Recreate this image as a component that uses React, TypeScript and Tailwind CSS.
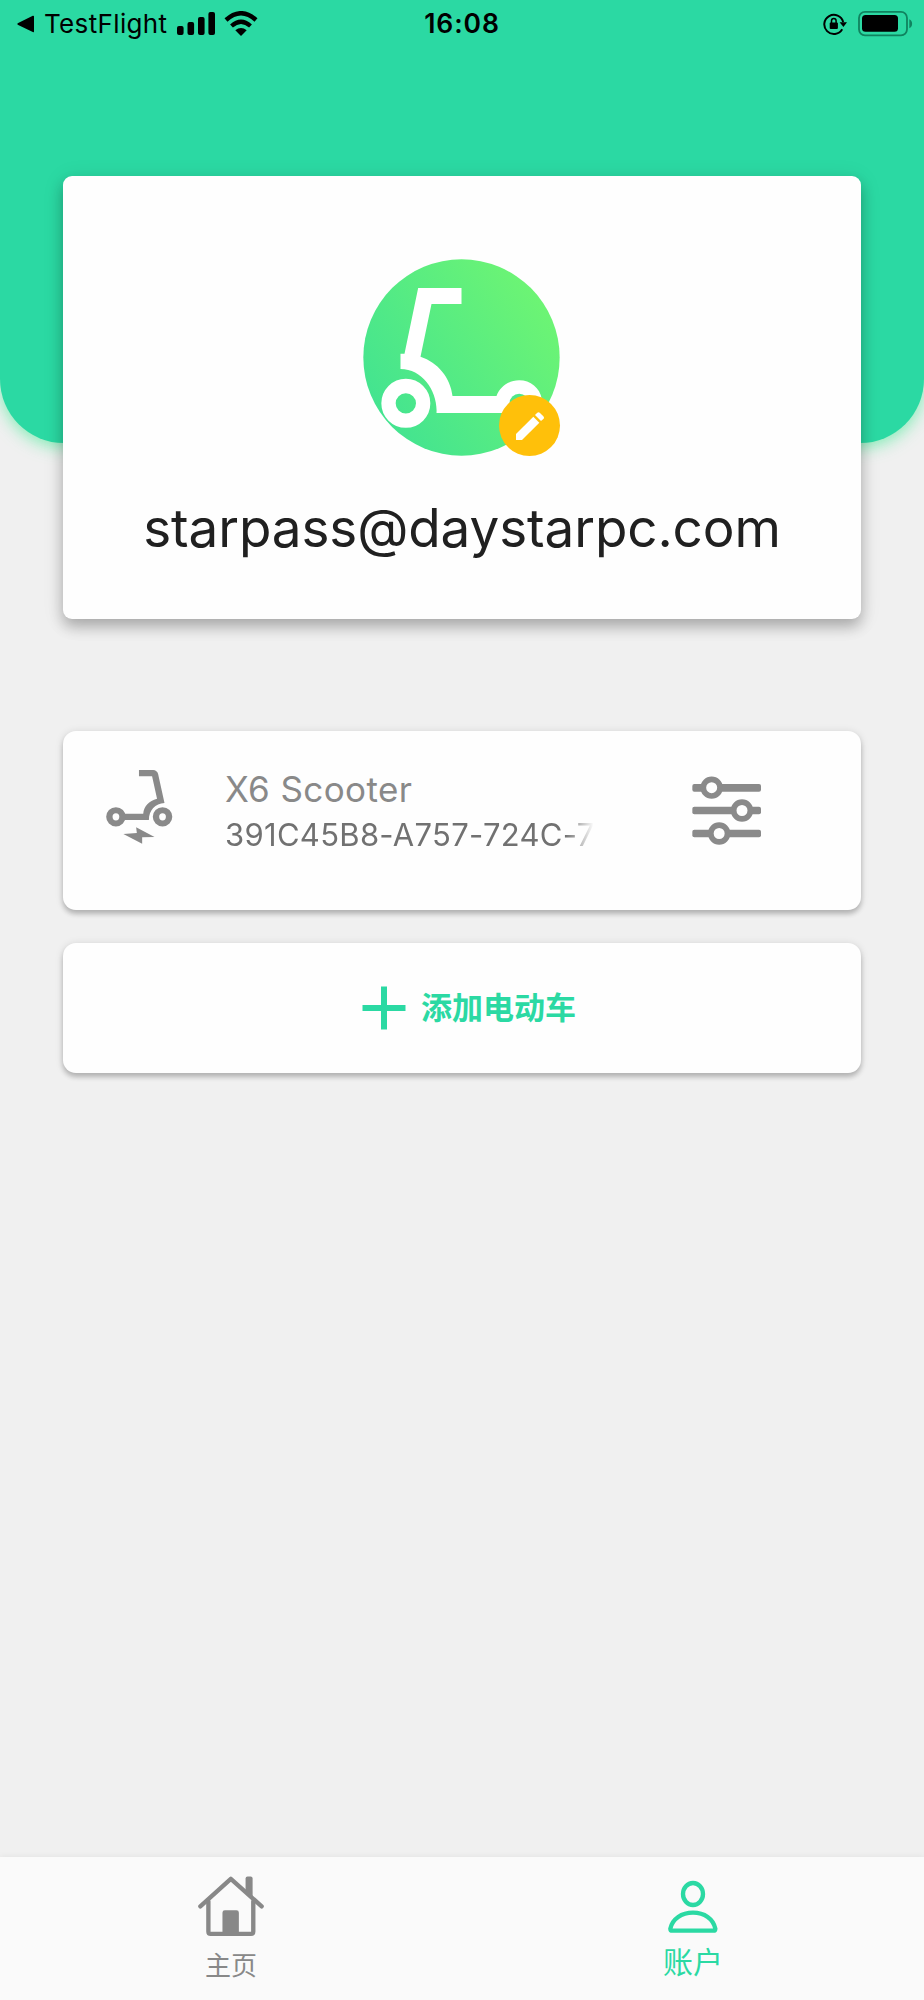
import React from "react";

function StatusBar() {
  return (
    <div className="grid h-[47px] grid-cols-3 items-center text-black">
      <div className="flex items-center pl-[17px]">
        <svg className="h-[18px] w-[17px]" viewBox="0 0 17 18">
          <path d="M1.2 8 15.8.8Q17 .4 17 1.6V16.4Q17 17.6 15.8 17L1.2 10Q-.6 9 1.2 8Z" />
        </svg>
        <span className="ml-[10px] w-[123px] whitespace-nowrap text-[26px] leading-[47px] tracking-[0.35px]">TestFlight</span>
        <svg className="ml-[10px] h-[23px] w-[38px] shrink-0" viewBox="0 0 38 23">
          <rect x="0" y="14" width="6.6" height="9" rx="2" />
          <rect x="10.500" y="10" width="6.6" height="13" rx="2" />
          <rect x="21" y="5" width="6.6" height="18" rx="2" />
          <rect x="31.400" y="0" width="6.6" height="23" rx="2" />
        </svg>
        <svg className="ml-[9px] h-[25px] w-[34px] shrink-0" viewBox="0 0 34 25">
          <path d="M2 9Q17-4.5 32 9" fill="none" stroke="#000" strokeWidth="4.4" />
          <path d="M7.5 15Q17 6.5 26.5 15" fill="none" stroke="#000" strokeWidth="4.2" />
          <path d="M11.3 19.3Q17 14.5 22.7 19.3L17 25Z" />
        </svg>
      </div>
      <div className="text-center text-[26.500px] font-semibold leading-[47px] tracking-[0.9px]">16:08</div>
      <div className="flex items-center justify-end pr-[11px]">
        <svg className="h-[22px] w-[24px]" viewBox="0 0 24 22">
          <path d="M19.2 16.2A9.6 9.6 0 1 1 20.2 9" fill="none" stroke="#000" strokeWidth="2" />
          <path d="M16.6 9.2H24L20.4 14Z" />
          <rect x="6.7" y="9.4" width="8.2" height="6.6" rx="1" />
          <path d="M8.5 10V7.7a2.3 2.3 0 0 1 4.6 0V10" fill="none" stroke="#000" strokeWidth="1.5" />
        </svg>
        <svg className="ml-[10px] h-[26px] w-[56px]" viewBox="0 0 56 26">
          <rect x="2" y="0.9" width="48" height="23.4" rx="6" fill="none" stroke="#10835f" strokeWidth="1.8" />
          <rect x="5" y="4.1" width="36" height="16.6" rx="3.5" />
          <path d="M52.3 8.300q2.8 1.2 2.8 4.5t-2.8 4.5Z" fill="#10835f" />
        </svg>
      </div>
    </div>
  );
}

function Avatar() {
  return (
    <div className="ml-[300px] relative h-[197px] w-[197px]">
      <svg className="h-full w-full" viewBox="71 57 590 591">
        <defs>
          <linearGradient id="lime" x1="0" y1="0.85" x2="1" y2="0.15">
            <stop offset="0" stopColor="#3fe293" />
            <stop offset="1" stopColor="#71f671" />
          </linearGradient>
        </defs>
        <circle cx="366" cy="352.5" r="294.5" fill="url(#lime)" />
        <path
          fill="#fff"
          d="M236 144H366V192H276L243 350C295 367 333 413 339 468H471C482 440 508 421 539 421C573 421 601 444 607 477L560 519H291C295 455 250 387 183 387V341H195Z"
        />
        <circle cx="199" cy="490" r="52" fill="none" stroke="#fff" strokeWidth="43" />
        <circle cx="539" cy="490" r="29" fill="#4fe888" />
      </svg>
      <button className="absolute right-0 bottom-0 flex h-[61px] w-[61px] items-center justify-center rounded-full bg-[#ffc00a]">
        <svg className="h-[28px] w-[28px]" viewBox="0 0 84 84" fill="#fff">
          <path d="M0 66 52 14 70 32 18 84H0Z" />
          <path d="M57 9 64 2Q68-1 72 3L82 13Q86 17 82 21L75 27Z" />
        </svg>
      </button>
    </div>
  );
}

function ProfileCard() {
  return (
    <section className="mx-[63px] -mt-[267px] h-[443px] rounded-[9px] bg-[#fefefe] pt-[83px] shadow-[0_8px_14px_rgba(0,0,0,0.24),0_3px_22px_rgba(0,0,0,0.1)]">
      <Avatar />
      <p className="mt-[40px] whitespace-nowrap text-center text-[53px] leading-[64px] tracking-[-0.1px] text-[#202020]">
        starpass@daystarpc.com
      </p>
    </section>
  );
}

function DeviceCard() {
  return (
    <section className="mx-[63px] mt-[112px] flex h-[179px] rounded-[13px] bg-[#fefefe] pt-[35px] shadow-[0_4px_5px_rgba(0,0,0,0.2),0_1px_9px_rgba(0,0,0,0.12)]">
      <svg className="mt-[4px] ml-[43px] h-[74px] w-[67px] shrink-0" viewBox="156 149 189 222" preserveAspectRatio="none" fill="#8a8a8a">
        <path d="M249 149H289Q300 150 303 161L321 248C295 250 277 270 277 299H205V280H261C263 258 277 241 300 235L286 168H249Z" />
        <ellipse cx="184" cy="289.500" rx="18.500" ry="20" fill="none" stroke="#8a8a8a" strokeWidth="18" />
        <ellipse cx="315.500" cy="289.500" rx="18.500" ry="20" fill="none" stroke="#8a8a8a" strokeWidth="18" />
        <path d="M241 321 293 350 258 351V370L205 341 243 338Z" />
      </svg>
      <div className="ml-[52px] w-[369px] whitespace-nowrap">
        <h2 className="mt-[1px] text-[35px] leading-[44px] tracking-[0.4px] text-[#898989]">X6 Scooter</h2>
        <p className="mt-[2px] text-[31px] leading-[44px] tracking-[0.3px] text-[#717171] [mask-image:linear-gradient(to_right,#000_340px,transparent_369px)]">
          391C45B8-A757-724C-7
        </p>
      </div>
      <svg className="mt-[10px] ml-[98px] h-[69px] w-[70px] shrink-0" viewBox="275 168 210 207" fill="#8a8a8a">
        <rect x="276" y="192" width="206" height="23" rx="6" />
        <rect x="276" y="260" width="206" height="23" rx="6" />
        <rect x="276" y="329" width="206" height="23" rx="6" />
        <g fill="#fefefe" stroke="#8a8a8a" strokeWidth="17">
          <circle cx="334" cy="203" r="25" />
          <circle cx="425" cy="271.500" r="25" />
          <circle cx="356.500" cy="340.500" r="25" />
        </g>
      </svg>
    </section>
  );
}

function AddCard() {
  return (
    <button className="mx-[63px] mt-[33px] flex h-[130px] items-center rounded-[13px] bg-[#fefefe] pl-[299px] shadow-[0_4px_5px_rgba(0,0,0,0.2),0_1px_9px_rgba(0,0,0,0.12)]">
      <svg className="h-[44px] w-[44px]" viewBox="0 0 44 44">
        <path d="M22 .5V43.500M.5 22H43.500" stroke="#2bd9a3" strokeWidth="6" />
      </svg>
      <span className="ml-[15px] text-[31px] font-bold leading-[44px] text-[#2bd9a3]">添加电动车</span>
    </button>
  );
}

function TabBar() {
  return (
    <nav className="mt-auto grid h-[143px] grid-cols-2 bg-[#fafafa] shadow-[0_-1px_6px_rgba(0,0,0,0.05)]">
      <a className="flex flex-col items-center pt-[19px] text-[#888]">
        <svg className="h-[61px] w-[66px]" viewBox="113 110 197 181" fill="none" stroke="#888" strokeLinecap="round" strokeLinejoin="round">
          <path d="M120 200 211 118 303 200" strokeWidth="13" />
          <path d="M144 185V275Q144 282 151 282H271Q278 282 278 275V185" strokeWidth="13" />
          <path d="M255 117Q255 111 261 111H270Q276 111 276 117V174L255 155Z" fill="#888" stroke="none" />
          <path d="M186 282V219Q186 212 193 212H228Q235 212 235 219V282Z" fill="#888" stroke="none" />
        </svg>
        <span className="mt-[10px] text-[26px] leading-[38px]">主页</span>
      </a>
      <a className="flex flex-col items-center pt-[23px] text-[#2bd9a3]">
        <svg className="h-[54px] w-[50px]" viewBox="144 121 150 160" fill="none" stroke="#2bd9a3" strokeWidth="13">
          <ellipse cx="219" cy="162" rx="30" ry="33" />
          <path d="M151 266C157 236 185 218 219 218S280 236 286 266Q286 272 280 272H157Q151 272 151 266Z" />
        </svg>
        <span className="mt-[9px] text-[30px] leading-[38px]">账户</span>
      </a>
    </nav>
  );
}

export default function App() {
  return (
    <main className="flex h-[2000px] w-[924px] flex-col overflow-hidden bg-[#f0f0f0] font-['Inter','Noto_Sans_CJK_SC',sans-serif]">
      <header className="h-[443px] shrink-0 rounded-b-[64px] bg-[#2bd9a3] shadow-[0_4px_16px_rgba(70,235,150,0.65)]">
        <StatusBar />
      </header>
      <ProfileCard />
      <DeviceCard />
      <AddCard />
      <TabBar />
    </main>
  );
}
